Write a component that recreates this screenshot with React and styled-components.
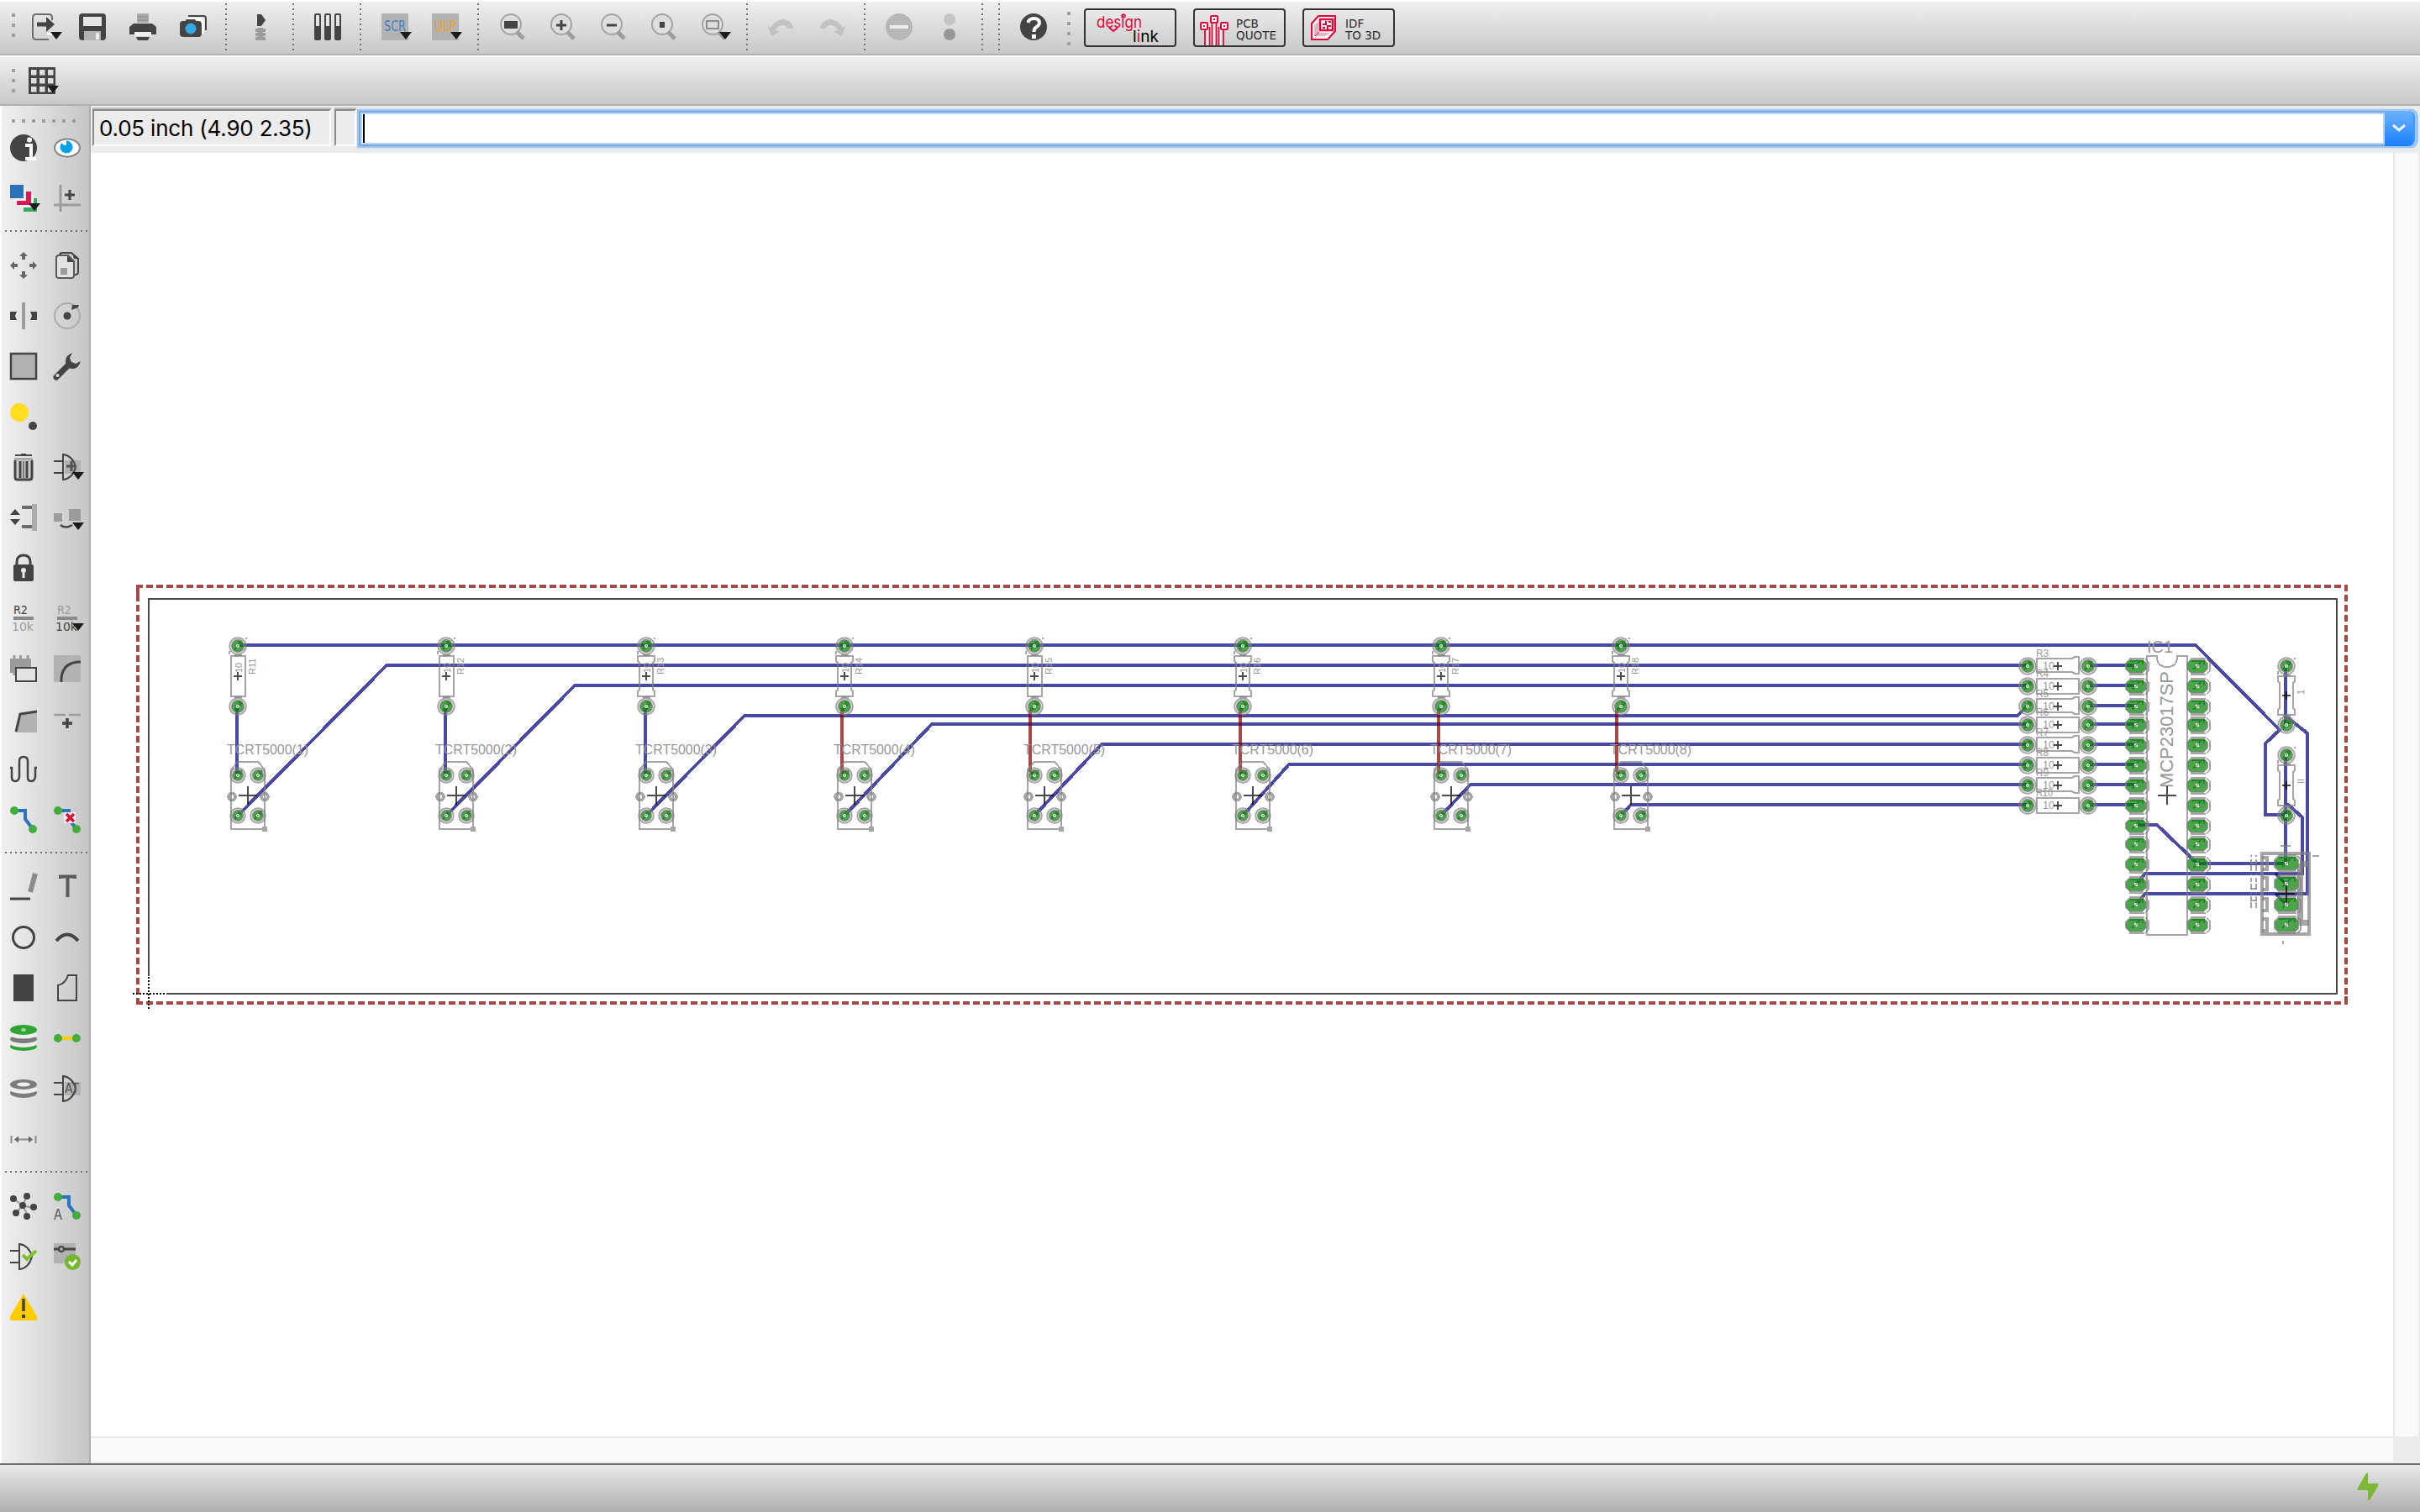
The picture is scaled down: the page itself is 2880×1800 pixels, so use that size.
import React from "react";
import styled, { createGlobalStyle } from "styled-components";

const GlobalStyle = createGlobalStyle`
  * { box-sizing: border-box; }
  body { margin: 0; background: #ececec; font-family: Inter, "Liberation Sans", sans-serif; }
`;

const Window = styled.div`
  width: 2880px;
  height: 1800px;
  display: flex;
  flex-direction: column;
  background: #ececec;
  overflow: hidden;
`;

const Bar = styled.div`
  height: ${(p) => p.$h}px;
  flex: none;
  display: flex;
  align-items: center;
  padding-left: 14px;
  padding-bottom: ${(p) => p.$lift || 0}px;
  border-top: 2px solid #fff;
  border-bottom: 2px solid #b0b0b0;
  background: linear-gradient(#efefef, #c8c8c8);
`;

const Handle = styled.div`
  flex: none;
  width: ${(p) => (p.$row ? 76 : 4)}px;
  height: ${(p) => (p.$row ? 4 : p.$h || 28)}px;
  margin: ${(p) => p.$m || "0"};
  background: repeating-linear-gradient(${(p) => (p.$row ? "to right" : "to bottom")}, #9f9f9f 0 4px, transparent 4px 12px);
`;

const ToolButton = styled.div`
  flex: none;
  width: ${(p) => p.$w || 60}px;
  height: 32px;
  display: flex;
  justify-content: center;
`;

const VRule = styled.div`
  flex: none;
  width: 2px;
  height: 58px;
  margin: ${(p) => p.$m || "2px 10px 0 8px"};
  background: repeating-linear-gradient(to bottom, #6f6f6f 0 2px, transparent 2px 6px);
`;

const BrandButton = styled.div`
  flex: none;
  width: 110px;
  height: 46px;
  margin-right: 20px;
  margin-bottom: -2px;
  border: 2px solid #333;
  border-radius: 4px;
  display: flex;
  align-items: center;
  overflow: hidden;
`;

const BrandText = styled.div`
  font: 13.5px/14px "DejaVu Sans", sans-serif;
  color: #2b2b2b;
  white-space: pre;
  padding-top: 4px;
`;

const Main = styled.div`
  flex: 1;
  min-height: 0;
  display: flex;
`;

const Palette = styled.div`
  flex: none;
  width: 108px;
  padding-top: 16px;
  border-left: 2px solid #fff;
  border-right: 2px solid #adadad;
  background: linear-gradient(to right, #f0f0f0, #c6c6c6);
`;

const PaletteRow = styled.div`
  height: 60px;
  display: flex;
  gap: 20px;
  padding: 14px 0 0 10px;
`;

const HRule = styled.div`
  width: 100px;
  height: 2px;
  margin: 8px 0 10px 4px;
  background: repeating-linear-gradient(to right, #6f6f6f 0 2px, transparent 2px 6px);
`;

const Content = styled.div`
  flex: 1;
  min-width: 0;
  display: flex;
  flex-direction: column;
`;

const CommandRow = styled.div`
  flex: none;
  height: 56px;
  display: flex;
  align-items: flex-start;
  padding: 2px 2px 0 2px;
`;

const Readout = styled.div`
  width: ${(p) => p.$w}px;
  height: 44px;
  margin: 2px ${(p) => p.$gap}px 0 0;
  padding: 2px 0 0 6px;
  border-left: 2px solid #8a8a8a;
  border-right: 2px solid #fff;
  border-bottom: 2px solid #fff;
  border-top: 2px solid #8a8a8a;
  box-shadow: 0 -2px 0 #bdbdbd;
  font-size: 26px;
  line-height: 38px;
  letter-spacing: -0.2px;
  white-space: pre;
  color: #000;
`;

const Combo = styled.div`
  flex: 1;
  height: 50px;
  display: flex;
  padding: 4px 4px 4px 2px;
  border-radius: 4px 12px 12px 4px;
  background: linear-gradient(#dfe6ee 0 2px, #9fc6f3 2px 48px, #dfe6ee 48px);
`;

const Field = styled.div`
  flex: 1;
  padding: 0 0 0 2px;
  background: #fff;
  border: 2px solid #7ba8db;
  border-right: 0;
  box-shadow: inset 0 0 0 2px #b5d6fb;
`;

const Caret = styled.div`
  width: 2px;
  height: 34px;
  margin: 2px 0 0 1px;
  background: #000;
`;

const DropButton = styled.div`
  width: 36px;
  border-radius: 0 8px 8px 0;
  background: linear-gradient(#6cb1fa, #1a80ff);
  border-right: 2px solid #3f97f7;
  display: flex;
  align-items: center;
  justify-content: center;
`;

const CanvasGrid = styled.div`
  flex: 1;
  min-height: 0;
  display: grid;
  grid-template-columns: 2740px 30px 2px;
  grid-template-rows: 1528px 30px 2px;
`;

const Canvas = styled.div`
  background: #fff;
`;

const ScrollV = styled.div`
  background: #fafafa;
  border-left: 2px solid #e8e8e8;
`;

const ScrollH = styled.div`
  grid-column: 1;
  grid-row: 2;
  background: #fafafa;
  border-top: 2px solid #e8e8e8;
`;

const StatusBar = styled.div`
  flex: none;
  height: 58px;
  border-top: 2px solid #6e6e6e;
  background: linear-gradient(#e8e8e8, #b0b0b0);
  display: flex;
  justify-content: flex-end;
  padding: 10px 48px 0 0;
`;

const Svg = styled.svg`
  display: block;
  flex: none;
  overflow: visible;
`;

const D = "#444442";
const G = "#9c9c9a";
const Drop = () => <path d="M22 22h14l-7 9z" fill="#1b1b1b" />;

const Lens = ({ children }) => (
  <>
    <circle cx="14" cy="13" r="12" fill="#dedede" stroke="#a5a5a5" strokeWidth="2" />
    <path d="M21 22l8 8" stroke={G} strokeWidth="5" />
    {children}
  </>
);
const Gate = () => <path d="M0 9h10M0 23h10M11 1v30c8-1 13-7 15-15C24 8 19 2 11 1z" fill="none" stroke={D} strokeWidth="2" />;
const Route = ({ children }) => (
  <>
    <path d="M5 5h13v10l9 12" fill="none" stroke="#2a74bd" strokeWidth="4" />
    {children}
    <circle cx="5" cy="5" r="5" fill="#42ad3a" />
    <circle cx="27" cy="27" r="5" fill="#42ad3a" />
  </>
);
const plus = (x, y, s = 4) => `M${x - s} ${y}h${2 * s}M${x} ${y - s}v${2 * s}`;
const Tiny = ({ x, y, fill, size = 14, w, children }) => (
  <text x={x} y={y} fill={fill} fontSize={size} textLength={w} lengthAdjust="spacingAndGlyphs" fontFamily="DejaVu Sans, sans-serif">
    {children}
  </text>
);

const icons = {
  export: (<><path d="M24 8V5q0-4-4-4H5Q1 1 1 5v22q0 4 4 4h15" fill="none" stroke="#6e6e6c" strokeWidth="2" /><path d="M6 10.500h11V4l10 9-10 9v-6.500H6z" fill={D} /><path d="M18 24h6" stroke="#fff" strokeWidth="3" /><Drop /></>),
  save: (<><rect width="32" height="32" rx="4" fill={D} /><rect x="5" y="4" width="22" height="11" fill="#e4e4e4" /><rect x="6" y="21" width="20" height="11" fill="#b3b3b3" /><rect x="20" y="23" width="4" height="8" fill="#eee" /></>),
  print: (<><rect x="9" y="0" width="14" height="11" fill="#aaa" /><path d="M10 4h12M10 8h12" stroke="#888" strokeWidth="1" /><path d="M5 12h22l5 4v9H0v-9z" fill={D} /><rect x="6" y="22" width="20" height="5" fill="#eee" /><path d="M8 28h16l-2 4H10z" fill={D} /></>),
  camera: (<><path d="M10 3h18q3 0 3 3v14" fill="none" stroke={D} strokeWidth="2" /><path d="M8 7h16q3 0 3 3v14" fill="none" stroke="#fff" strokeWidth="3" /><rect y="9" width="26" height="19" rx="4" fill={D} /><path d="M6 10l2-3h10l2 3z" fill={D} /><circle cx="13" cy="18" r="6.500" fill="#35a8e6" /></>),
  board: (<><path d="M12 1l5 0 5 7-5 7h-5z" fill={D} /><rect x="10" y="18" width="12" height="4" fill={G} /><rect x="10" y="23" width="12" height="4" fill={G} /><rect x="10" y="28" width="12" height="4" fill={G} /><path d="M13 17h6v14h-6z" fill={G} /></>),
  library: (<>{[0, 12, 24].map((x) => (<g key={x}><rect x={x} width="8" height="32" rx="2" fill={D} /><rect x={x + 2} y="2" width="4" height="13" fill="#e4e4e4" /></g>))}</>),
  scr: (<><rect width="32" height="32" fill="#b2b2b2" /><Tiny x={3} y={21} w={26} fill="#3f83c4" size={17}>SCR</Tiny><Drop /></>),
  ulp: (<><rect width="32" height="32" fill="#b2b2b2" /><Tiny x={3} y={21} w={26} fill="#e8a030" size={17}>ULP</Tiny><Drop /></>),
  zfit: <Lens><rect x="6" y="9" width="16" height="9" fill={D} /></Lens>,
  zin: <Lens><path d={plus(14, 14, 6)} stroke={D} strokeWidth="3" /></Lens>,
  zout: <Lens><path d="M8 14h12" stroke={D} strokeWidth="3" /></Lens>,
  zredraw: <Lens><rect x="11" y="10" width="6" height="7" fill={D} /></Lens>,
  zselect: <Lens><rect x="7" y="9" width="14" height="9" fill="none" stroke="#8c8c8c" strokeWidth="2" /><Drop /></Lens>,
  undo: <path d="M0 15l4 12 10-5-5-2q3-6 8-6t6 4h8Q27 7 18 7T3 17z" fill="#c2c2c2" />,
  redo: <path d="M32 15l-4 12-10-5 5-2q-3-6-8-6t-6 4H1Q5 7 14 7t15 10z" fill="#c2c2c2" />,
  stop: (<><circle cx="16" cy="16" r="16" fill="#b7b7b7" /><rect x="5" y="14" width="22" height="4" fill="#eee" /></>),
  go: (<><circle cx="16" cy="7" r="7" fill="#c4c4c4" /><circle cx="16" cy="25" r="7" fill="#979795" /></>),
  help: (<><circle cx="16" cy="16" r="16" fill={D} /><path d="M9.500 11q1-5 7-5t6.500 5q0 3-4 5.500-2.500 1.500-2.500 5.500" fill="none" stroke="#fff" strokeWidth="4" /><rect x="14" y="25" width="5" height="5" fill="#fff" /></>),
  grid: (<><rect width="32" height="32" fill={D} />{[3, 13, 23].map((y) => [3, 13, 23].map((x) => <rect key={x + "-" + y} x={x} y={y} width="6.500" height="6.500" fill="#dedede" />))}<Drop /></>),
  info: (<><circle cx="16" cy="16" r="16" fill={D} /><circle cx="23" cy="6.500" r="3" fill="#fff" /><path d="M18 13h7v15M18 29h13" fill="none" stroke="#fff" strokeWidth="4" /></>),
  eye: (<><ellipse cx="16" cy="16" rx="15" ry="10.500" fill="#fff" stroke="#858585" strokeWidth="2" /><circle cx="15" cy="15" r="7.500" fill="#08a0e8" /><path d="M8 8q2 5 7 5V7z" fill="#fff" /></>),
  layers: (<><path d="M16 16h16v16H16z" fill="#35a862" /><path d="M12 12h16v15H12z" fill="#f2f2f2" /><path d="M8 8h17v16H8z" fill="#db1a54" /><path d="M4 4h15v15H4z" fill="#f2f2f2" /><path d="M0 0h16v16H0z" fill="#2b71b9" /><Drop /></>),
  mark: (<><path d="M8 0v32M0 24h32" stroke={G} strokeWidth="3" /><path d={plus(19, 12, 6)} stroke={D} strokeWidth="3" /></>),
  move: (<path d="M16 0l5 5h-3v4h-4V5h-3zM16 32l5-5h-3v-4h-4v4h-3zM0 16l5-5v3h4v4H5v3zM32 16l-5-5v3h-4v4h4v3z" fill="#666664" />),
  copy: (<><path d="M7 4q0-3 3-3h11l8 7v16q0 3-4 3" fill="none" stroke={D} strokeWidth="2" /><path d="M3 7q0-3 3-3h11l7 7v17q0 3-3 3H6q-3 0-3-3z" fill="#e2e2e2" stroke="#5a5a58" strokeWidth="2" /><path d="M16 4l8 8h-8zM22 1l7 7h-5z" fill={D} /><rect x="8" y="19" width="8" height="8" fill={G} /></>),
  mirror: (<><path d="M16 0v32" stroke={G} strokeWidth="4" /><path d="M0 11h8l-2 5 2 5H0zM32 11h-8l2 5-2 5h8z" fill={D} /></>),
  rotate: (<><circle cx="16" cy="16" r="15" fill="none" stroke="#aaa" strokeWidth="2" /><circle cx="16" cy="16" r="4.500" fill={D} /><path d="M21 9l1-6 8 0-1 3z" fill={D} /></>),
  group: <rect x="1" y="1" width="30" height="30" fill="#b2b2b2" stroke={D} strokeWidth="2.500" />,
  wrench: (<><path d="M3 29L16 16" stroke={D} strokeWidth="7" strokeLinecap="round" /><path d="M22 0q-8 3-8 10l1 7 6 2q8 1 11-9l-6 3-5-2-2-5z" fill={D} /><circle cx="4.500" cy="27" r="2" fill="#ddd" /></>),
  bulb: (<><circle cx="11" cy="11" r="11" fill="#ffde22" /><circle cx="27" cy="27" r="5" fill={D} /></>),
  trash: (<><path d="M6 2h20M13 1h6" stroke={D} strokeWidth="2" /><path d="M5 5h22v3H5z" fill="#aaa" /><path d="M6 8v20q0 3 3 3h14q3 0 3-3V8" fill="#ccc" stroke={D} strokeWidth="3" /><path d="M12 9v20M20 9v20" stroke={D} strokeWidth="3" /><path d="M16 9v20" stroke="#777" strokeWidth="2" /></>),
  addGate: (<><rect x="13" y="8" width="19" height="16" fill="#b2b2b2" /><Gate /><path d={plus(21, 15, 6)} stroke="#555" strokeWidth="3" /><Drop /></>),
  pinswap: (<><path d="M0 13l6-7 6 7zM0 18l6 7 6-7z" fill={D} /><path d="M14 4h13M14 27h13" stroke="#6a6a68" strokeWidth="4" /><path d="M29 0v32" stroke="#adadad" strokeWidth="6" /></>),
  replace: (<><path d="M0 11h10v10H0zM18 6h14v14H18z" fill={G} /><path d="M8 25q6 5 14 0" fill="none" stroke={D} strokeWidth="2.500" /><Drop /></>),
  lock: (<><path d="M8 14V9q0-8 8-8t8 8v5" fill="none" stroke={D} strokeWidth="3" /><rect x="4" y="12" width="24" height="20" rx="2" fill={D} /><circle cx="16" cy="19" r="3" fill="#e6e6e6" /><rect x="14.500" y="19" width="3" height="9" fill="#e6e6e6" /></>),
  name: (<><Tiny x={4} y={11} w={17} fill={D}>R2</Tiny><rect x="4" y="14" width="24" height="4" fill="#8a8a88" /><Tiny x={2} y={31} w={26} fill={G}>10k</Tiny></>),
  value: (<><Tiny x={4} y={11} w={17} fill={G}>R2</Tiny><rect x="4" y="14" width="24" height="4" fill="#8a8a88" /><Tiny x={2} y={31} w={26} fill={D}>10k</Tiny><Drop /></>),
  smash: (<><rect y="4" width="25" height="17" fill={G} /><path d="M5 0v4M12.500 0v4M21 0v4M5 21v3" stroke={G} strokeWidth="3" /><rect x="7" y="15" width="24" height="16" fill="#e2e2e2" stroke={D} strokeWidth="2" /></>),
  miter: (<><rect width="32" height="32" fill="#b2b2b2" /><path d="M9 32V27Q11 8 32 8" fill="none" stroke={D} strokeWidth="3" /></>),
  split: (<><path d="M7 32L12 11 32 7v25z" fill="#b2b2b2" /><path d="M7 31L12 10 32 7" fill="none" stroke={D} strokeWidth="3" /></>),
  optimize: (<><path d="M0 11h14M18 11h14" stroke={G} strokeWidth="2.500" /><path d={plus(16, 21, 6)} stroke={D} strokeWidth="3.500" /></>),
  meander: <path d="M0 14h2v11q0 5 4 5t5-5V6q0-5 5-5t5 5v19q0 5 4 5t5-5V14h2" fill="none" stroke={D} strokeWidth="2.500" />,
  route: <Route />,
  ripup: (<Route><rect x="12" y="7" width="14" height="13" fill="#eee" /><path d="M15 9l9 9M24 9l-9 9" stroke="#d8103c" strokeWidth="3.500" /></Route>),
  line: (<><path d="M0 30h24" stroke={D} strokeWidth="3" /><path d="M30 0l-6 22" stroke="#8a8a88" strokeWidth="6" /></>),
  text: <path d="M8 6V3.500h17V6M16.500 4v24" fill="none" stroke="#5a5a58" strokeWidth="4" />,
  circle: <circle cx="16" cy="16" r="12.500" fill="none" stroke={D} strokeWidth="3" />,
  arc: <path d="M3 20Q16 5 29 20" fill="none" stroke={D} strokeWidth="4" />,
  rect: <rect x="4" width="24" height="32" fill={D} />,
  polygon: <path d="M27 1v30H5V13q9-2 12-12z" fill="none" stroke={D} strokeWidth="2" />,
  via: (<><ellipse cx="16" cy="26" rx="16" ry="5" fill="#2fa534" /><ellipse cx="16" cy="22" rx="16" ry="5" fill="#eee" /><ellipse cx="16" cy="17" rx="16" ry="5" fill="#7c7c7a" /><ellipse cx="16" cy="12" rx="16" ry="4.500" fill="#eee" /><ellipse cx="16" cy="6" rx="16" ry="6" fill="#2fa534" /><ellipse cx="16" cy="6" rx="3" ry="2" fill="#9bd69b" /></>),
  signal: (<><path d="M5 16h22" stroke="#fc0" strokeWidth="4" /><circle cx="5" cy="16" r="5" fill="#42ad3a" /><circle cx="27" cy="16" r="5" fill="#42ad3a" /></>),
  hole: (<><ellipse cx="16" cy="21" rx="16" ry="6" fill="#7c7c7a" /><ellipse cx="16" cy="17" rx="16" ry="5" fill="#eee" /><ellipse cx="16" cy="11" rx="16" ry="6" fill="#7c7c7a" /><ellipse cx="16" cy="11" rx="8" ry="2.500" fill="#eee" /></>),
  attribute: (<><rect x="13" y="8" width="19" height="16" fill="#b2b2b2" /><Gate /><Tiny x={13} y={21} w={17} fill="#555" size={15}>AT</Tiny></>),
  dimension: (<><path d="M1.500 12v9M30.500 12v9M8 16.500h16" stroke="#8a8a88" strokeWidth="2" /><path d="M5 16.500l5-4v8zM27 16.500l-5-4v8z" fill="#666" /></>),
  ratsnest: (<><path d="M4 7l11 8 12 3M20 4l-5 11 6 12M15 15L7 24" stroke={G} fill="none" strokeWidth="2" />{[[4, 7], [20, 4], [15, 15], [28, 17], [7, 24], [20, 28]].map(([x, y]) => <circle key={x + "," + y} cx={x} cy={y} r="4" fill={D} />)}</>),
  auto: (<><Route /><Tiny x={0} y={32} w={10} fill="#555" size={18}>A</Tiny></>),
  erc: (<><Gate /><path d="M15 14l5 5L31 9" fill="none" stroke="#7dc02a" strokeWidth="4" /></>),
  drc: (<><rect width="26" height="24" fill="#b2b2b2" /><path d="M0 7h26" stroke={D} strokeWidth="3" /><circle cx="9" cy="7" r="3" fill="#aaa" stroke={D} strokeWidth="2" /><circle cx="22.500" cy="22.500" r="9.500" fill="#74b62e" /><path d="M18 22l4 4 5-6" fill="none" stroke="#fff" strokeWidth="3" /></>),
  errors: (<><path d="M16 0L32 27v5H0v-5z" fill="#fc0" /><path d="M16 6v15" stroke={D} strokeWidth="3.500" /><rect x="14" y="25" width="4" height="4" fill={D} /></>),
};

const Icon = ({ name }) => (
  <Svg width="32" height="32" viewBox="0 0 32 32">{icons[name]}</Svg>
);

const Tool = ({ name, w }) => (
  <ToolButton $w={w}><Icon name={name} /></ToolButton>
);

const paletteRows = [
  ["info", "eye"], ["layers", "mark"], null,
  ["move", "copy"], ["mirror", "rotate"], ["group", "wrench"], ["bulb"],
  ["trash", "addGate"], ["pinswap", "replace"], ["lock"], ["name", "value"],
  ["smash", "miter"], ["split", "optimize"], ["meander"], ["route", "ripup"], null,
  ["line", "text"], ["circle", "arc"], ["rect", "polygon"], ["via", "signal"],
  ["hole", "attribute"], ["dimension"], null,
  ["ratsnest", "auto"], ["erc", "drc"], ["errors"],
];

/* ---- board drawing, in window coordinates ---- */

const SILK = "rgba(128,128,128,.71)";
const COPPER = "rgba(0,128,0,.71)";
const BOTTOM = "rgba(0,0,128,.71)";
const TOP = "rgba(128,0,0,.71)";
const INK = "rgba(0,0,0,.71)";

const Cross = ({ x, y, s }) => <path d={plus(x, y, s)} stroke={INK} strokeWidth="2" />;

const Pad = ({ x, y, r = 10 }) => (
  <g shapeRendering="auto">
    <circle cx={x} cy={y} r={r - 2.5} fill={COPPER} />
    <path d={`M${x - 4} ${y + 4}L${x + 5} ${y - 5}M${x} ${y - 5}h4v4`} stroke="#228a22" strokeWidth="2.500" fill="none" />
    <circle cx={x} cy={y} r={r - 0.25} fill="none" stroke={SILK} strokeWidth="2" />
    <circle cx={x} cy={y} r={r - 2.75} fill="none" stroke={SILK} strokeWidth="1.800" />
    <circle cx={x} cy={y} r="2" fill="#fff" />
    <path d={`M${x - 2} ${y + 2}l4-4M${x - 2} ${y - 2}l4 4`} stroke={SILK} strokeWidth="1" />
  </g>
);

const LongPad = ({ x, y, w = 12, h = 7.5 }) => (
  <g>
    <path d={`M${x - w} ${y - h + 4}l4-4h${2 * w - 8}l4 4v${2 * h - 8}l-4 4h${8 - 2 * w}l-4-4z`} fill={COPPER} stroke={SILK} strokeWidth="2" />
    <path d={`M${x - w + 5} ${y - h + 1}h${2 * w - 9}v4M${x - 5} ${y + 4}l10-10`} stroke="#228a22" strokeWidth="2" fill="none" />
    <path d={`M${x - w + 4} ${y - h - 2}h${2 * w - 6}M${x - w + 4} ${y + h + 2}h${2 * w - 6}M${x + w - 1} ${y - h - 1}l4 4v${2 * h - 5}l-4 4`} stroke={SILK} strokeWidth="2" fill="none" />
    <circle cx={x} cy={y} r="2.500" fill="#fff" />
    <path d={`M${x - 2} ${y + 2}l4-4`} stroke={SILK} strokeWidth="1.500" />
  </g>
);

/* Vertical resistor; a waisted body narrows between its end caps. */
const Resistor = ({ x, y, y2, waist, label, value }) => {
  const t = y + 12;
  const b = y2 - 12;
  const body = waist
    ? `M${x - 10} ${t}h20v6l-2 2v${b - t - 16}l2 2v6h-20v-6l2-2v${16 - b + t}l-2-2z`
    : `M${x - 8} ${t}h17v${b - t}h-17z`;
  return (
    <g>
      <Pad x={x} y={y} />
      <Pad x={x} y={y2} />
      <path d={`M${x - 10} ${y + 10}v-4M${x + 10} ${y - 10}v2M${x - 4} ${y + 11}h9M${x - 4} ${y2 - 11}h9`} stroke={SILK} strokeWidth="2" />
      <path d={body} fill="none" stroke={SILK} strokeWidth="2" />
      <SilkText x={x + 21} y={t + 22} size={11} turn>{label}</SilkText>
      {value && <SilkText x={x + 5} y={t + 20} size={11} turn>{value}</SilkText>}
      <Cross x={x} y={(y + y2) / 2} s={5} />
    </g>
  );
};

const SilkText = ({ x, y, size, len, turn, children }) => (
  <text
    transform={turn ? `translate(${x} ${y}) rotate(-90)` : `translate(${x} ${y})`}
    fontFamily="Liberation Sans, sans-serif"
    fontSize={size}
    fill="#979797"
    textLength={len}
    lengthAdjust="spacingAndGlyphs"
  >
    {children}
  </text>
);

const Sensor = ({ x, n }) => (
  <g>
    <Pad x={x} y={923} r={9} />
    <Pad x={x + 24} y={923} r={9} />
    <Pad x={x} y={971} r={9} />
    <Pad x={x + 24} y={971} r={9} />
    <path d={`M${x} 907h24l8 9v71h-40v-71z`} fill="none" stroke={SILK} strokeWidth="2" />
    <circle cx={x - 7} cy="948.500" r="4" fill="none" stroke={SILK} strokeWidth="3.500" />
    <circle cx={x + 32} cy="948.500" r="4" fill="none" stroke={SILK} strokeWidth="3.500" />
    <rect x={x + 29} y="984" width="6" height="6" fill="#a5a5a5" />
    <SilkText x={x - 13} y={898} size={16.5} len={97}>{`TCRT5000(${n})`}</SilkText>
    <Cross x={x + 12} y={947} s={11} />
  </g>
);

const sensors = [
  { x: 283, bendX: 460, y: 792, dx: -1, label: "R11", color: BOTTOM },
  { x: 531, bendX: 684, y: 816, dx: -1, label: "R12", color: BOTTOM },
  { x: 769, bendX: 886, y: 852, dx: -1, label: "R13", color: BOTTOM, waist: true },
  { x: 1005, bendX: 1109, y: 862, dx: -3, label: "R14", color: TOP, waist: true },
  { x: 1231, bendX: 1311, y: 886, dx: -5, label: "R15", color: TOP },
  { x: 1479, bendX: 1534, y: 910, dx: -3, label: "R16", color: TOP, waist: true },
  { x: 1715, bendX: 1750, y: 934, dx: -3, label: "R17", color: TOP, waist: true },
  { x: 1929, bendX: 1941, y: 958, dx: -5, label: "R18", color: TOP, waist: true },
];

const pinRows = [793, 817, 841, 863, 887, 911, 935, 959, 983, 1005, 1029, 1053, 1077, 1101];
const connectorRows = [1028, 1052, 1077, 1101];

const Board = () => (
  <Svg width="2740" height="1528" viewBox="108 182 2740 1528" shapeRendering="crispEdges">
    <g stroke="#a54a4a" strokeWidth="4" strokeDasharray="8 4" fill="none">
      <path d="M162 698H2794M162 1194H2794M164 696V1196M2792 696V1196" />
    </g>
    <path d="M164 696v20M2792 1186v10M164 1188v8" stroke="#a54a4a" strokeWidth="4" />
    <path d="M177 1162V713H2781V1183H198" fill="none" stroke="#4a4a4a" strokeWidth="2" />
    <path d="M158 1183h39M177 1163v40" stroke="#000" strokeWidth="2" strokeDasharray="2 2" />

    <g fill="none" stroke={BOTTOM} strokeWidth="4">
      <path d="M283 768H2613L2713 869L2696 885V970H2720" />
      {sensors.map((s) => (
        <path
          key={s.x}
          d={`M${s.x} 971L${s.bendX} ${s.y}${s.y === 852 ? "H2401L2412 841" : "H2412"}`}
        />
      ))}
      {pinRows.slice(0, 8).map((y) => <path key={y} d={`M2485 ${y - 1}H2542`} />)}
      <path d="M2720 793V863M2720 899V1028M2615 1028H2720" />
      <path d="M2722 854L2746 873V1064H2553L2542 1077" />
      <path d="M2722 957L2740 973V1040H2553L2542 1053" />
      <path d="M2542 982H2567L2615 1028M2708 1040L2721 1053M2708 1064L2721 1077" />
    </g>
    {sensors.map((s) => (
      <path key={s.x} d={`M${s.x} 841L${s.x + s.dx} 846V918L${s.x} 923`} fill="none" stroke={s.color} strokeWidth="4" />
    ))}

    {sensors.map((s, i) => (
      <g key={s.x}>
        <Resistor x={s.x} y={769} y2={841} waist={s.waist} label={s.label} value="10" />
        <Sensor x={s.x} n={i + 1} />
      </g>
    ))}

    {pinRows.slice(0, 8).map((y, i) => (
      <g key={y}>
        <Pad x={2413} y={y} />
        <Pad x={2485} y={y} />
        <path d={i % 2 ? `M2424 ${y - 9}h50v18h-50z` : `M2424 ${y - 9}h42l3-2h5v20h-5l-3-2h-42z`} fill="none" stroke={SILK} strokeWidth="2" />
        <SilkText x={2423} y={y - 11} size={13} len={i === 7 ? 20 : 15}>{`R${i + 3}`}</SilkText>
        <SilkText x={2431} y={y + 4} size={13} len={14}>10</SilkText>
        <Cross x={2449} y={y} s={5} />
      </g>
    ))}

    {pinRows.map((y) => (
      <g key={y}>
        <LongPad x={2542} y={y} />
        <LongPad x={2615} y={y} />
      </g>
    ))}
    <path d="M2555 781h12v4q2 9 12 9t12-9v-4h12v332h-48z" fill="none" stroke={SILK} strokeWidth="2" />
    <SilkText x={2555} y={777} size={21} len={31}>IC1</SilkText>
    <SilkText x={2586} y={938} size={22.5} len={139} turn>MCP23017SP</SilkText>
    <Cross x={2579} y={947} s={11} />

    <Resistor x={2721} y={793} y2={863} waist label="1" />
    <Resistor x={2721} y={899} y2={971} waist label="II" />

    <rect x="2692" y="1016" width="56" height="96" fill="none" stroke={SILK} strokeWidth="4" />
    <path d="M2737 1028V1098H2748M2737 1028h10" fill="none" stroke={SILK} strokeWidth="7" />
    {connectorRows.map((y) => (
      <g key={y}>
        <path d={`M2692 ${y - 7}h6v14h-6`} fill="none" stroke={SILK} strokeWidth="4" />
        <LongPad x={2721} y={y} w={14} h={8} />
      </g>
    ))}
    <Cross x={2721} y={1064} s={10} />
    <path d="M2714 1007h12M2720 1007v7M2752 1019h8M2717 1120v4" stroke={SILK} strokeWidth="2" />
    <path d="M2679 1018v64M2685 1018v64" stroke={SILK} strokeWidth="2" strokeDasharray="2 3 5 2 7 3" />
    <path d="M2678 1028h8M2678 1058h8M2678 1072h8" stroke={SILK} strokeWidth="2" />
  </Svg>
);

const RED = "#dc0a3c";

const DesignLink = () => (
  <Svg width="106" height="42" viewBox="1292 12 106 42">
    <g fontFamily="Inter, sans-serif" fontSize="19">
      <text x="1305" y="33" fill={RED} textLength="54" lengthAdjust="spacingAndGlyphs">design</text>
      <text x="1348" y="50" fill="#000" textLength="31" lengthAdjust="spacingAndGlyphs">l<tspan fill={RED}>i</tspan>nk</text>
    </g>
    <circle cx="1337" cy="19" r="2" fill="none" stroke={RED} strokeWidth="1.500" />
    <path d="M1320 33l5 4 5-4" fill="none" stroke={RED} strokeWidth="2" />
  </Svg>
);

const PcbMark = () => (
  <Svg width="49" height="42" viewBox="1422 12 49 42">
    <path d="M1438 54V35h-5M1445 54V25M1452 54V35h5" stroke="#f6f6f6" strokeWidth="3" fill="none" />
    <path d="M1434 35v19M1439.500 32v22M1442.500 26v28M1447.500 26v28M1450.500 32v22M1456 35v19" stroke={RED} strokeWidth="1.800" />
    {[[1433, 31], [1445, 23], [1457, 31]].map(([x, y]) => (
      <rect key={x} x={x - 4} y={y - 4} width="8" height="8" rx="1" fill="#fff" stroke={RED} strokeWidth="2" />
    ))}
    <path d="M1432 31h2M1444 23h2M1456 31h2" stroke={RED} strokeWidth="2" />
  </Svg>
);

const CubeMark = () => (
  <Svg width="49" height="42" viewBox="1552 12 49 42">
    <path d="M1569 19h20v18l-9 10h-19V28z" fill="#f4f4f4" stroke={RED} strokeWidth="2" />
    <path d="M1564 30v13h13l6-4h-14V26z" fill="#e2b4bd" />
    <rect x="1571" y="23" width="15" height="13" fill="#f4f4f4" stroke={RED} strokeWidth="2.500" />
    <path d="M1574 29h4v-4M1581 26h3M1574 33h3M1580 35v-4h4" stroke={RED} strokeWidth="2" fill="none" />
    <path d="M1565 43l5-5" stroke={RED} strokeWidth="1" />
  </Svg>
);

export default function App() {
  return (
    <Window>
      <GlobalStyle />
      <Bar $h={66} $lift={2}>
        <Handle $m="0 6px 4px 0" />
        <Tool name="export" />
        <Tool name="save" w={52} />
        <Tool name="print" w={68} />
        <Tool name="camera" w={52} />
        <VRule $m="2px 10px 0 12px" />
        <Tool name="board" />
        <VRule />
        <Tool name="library" />
        <VRule />
        <Tool name="scr" />
        <Tool name="ulp" />
        <VRule />
        <Tool name="zfit" />
        <Tool name="zin" />
        <Tool name="zout" />
        <Tool name="zredraw" />
        <Tool name="zselect" />
        <VRule />
        <Tool name="undo" />
        <Tool name="redo" />
        <VRule />
        <Tool name="stop" />
        <Tool name="go" />
        <VRule />
        <VRule />
        <Tool name="help" />
        <Handle $h={40} $m="4px 16px 0 10px" />
        <BrandButton><DesignLink /></BrandButton>
        <BrandButton><PcbMark /><BrandText>{"PCB\nQUOTE"}</BrandText></BrandButton>
        <BrandButton><CubeMark /><BrandText>{"IDF\nTO 3D"}</BrandText></BrandButton>
      </Bar>
      <Bar $h={60}>
        <Handle $m="0 2px 0 0" />
        <Tool name="grid" />
      </Bar>
      <Main>
        <Palette>
          <Handle $row $m="0 0 0 12px" />
          {paletteRows.map((row, i) =>
            row ? (
              <PaletteRow key={i}>{row.map((n) => <Icon key={n} name={n} />)}</PaletteRow>
            ) : (
              <HRule key={i} />
            )
          )}
        </Palette>
        <Content>
          <CommandRow>
            <Readout $w={284} $gap={4}>0.05 inch (4.90 2.35)</Readout>
            <Readout $w={26} $gap={1} />
            <Combo>
              <Field><Caret /></Field>
              <DropButton>
                <Svg width="16" height="10" viewBox="0 0 16 10">
                  <path d="M1 1l7 6 7-6" fill="none" stroke="#e8f3ff" strokeWidth="3" />
                </Svg>
              </DropButton>
            </Combo>
          </CommandRow>
          <CanvasGrid>
            <Canvas><Board /></Canvas>
            <ScrollV />
            <ScrollH />
          </CanvasGrid>
        </Content>
      </Main>
      <StatusBar>
        <Svg width="28" height="32" viewBox="0 0 28 32">
          <path d="M14 0v12h12q1 1 0 3L16 32h-2V20H2q-1-1 0-3L12 0z" fill="#7ab836" />
        </Svg>
      </StatusBar>
    </Window>
  );
}
